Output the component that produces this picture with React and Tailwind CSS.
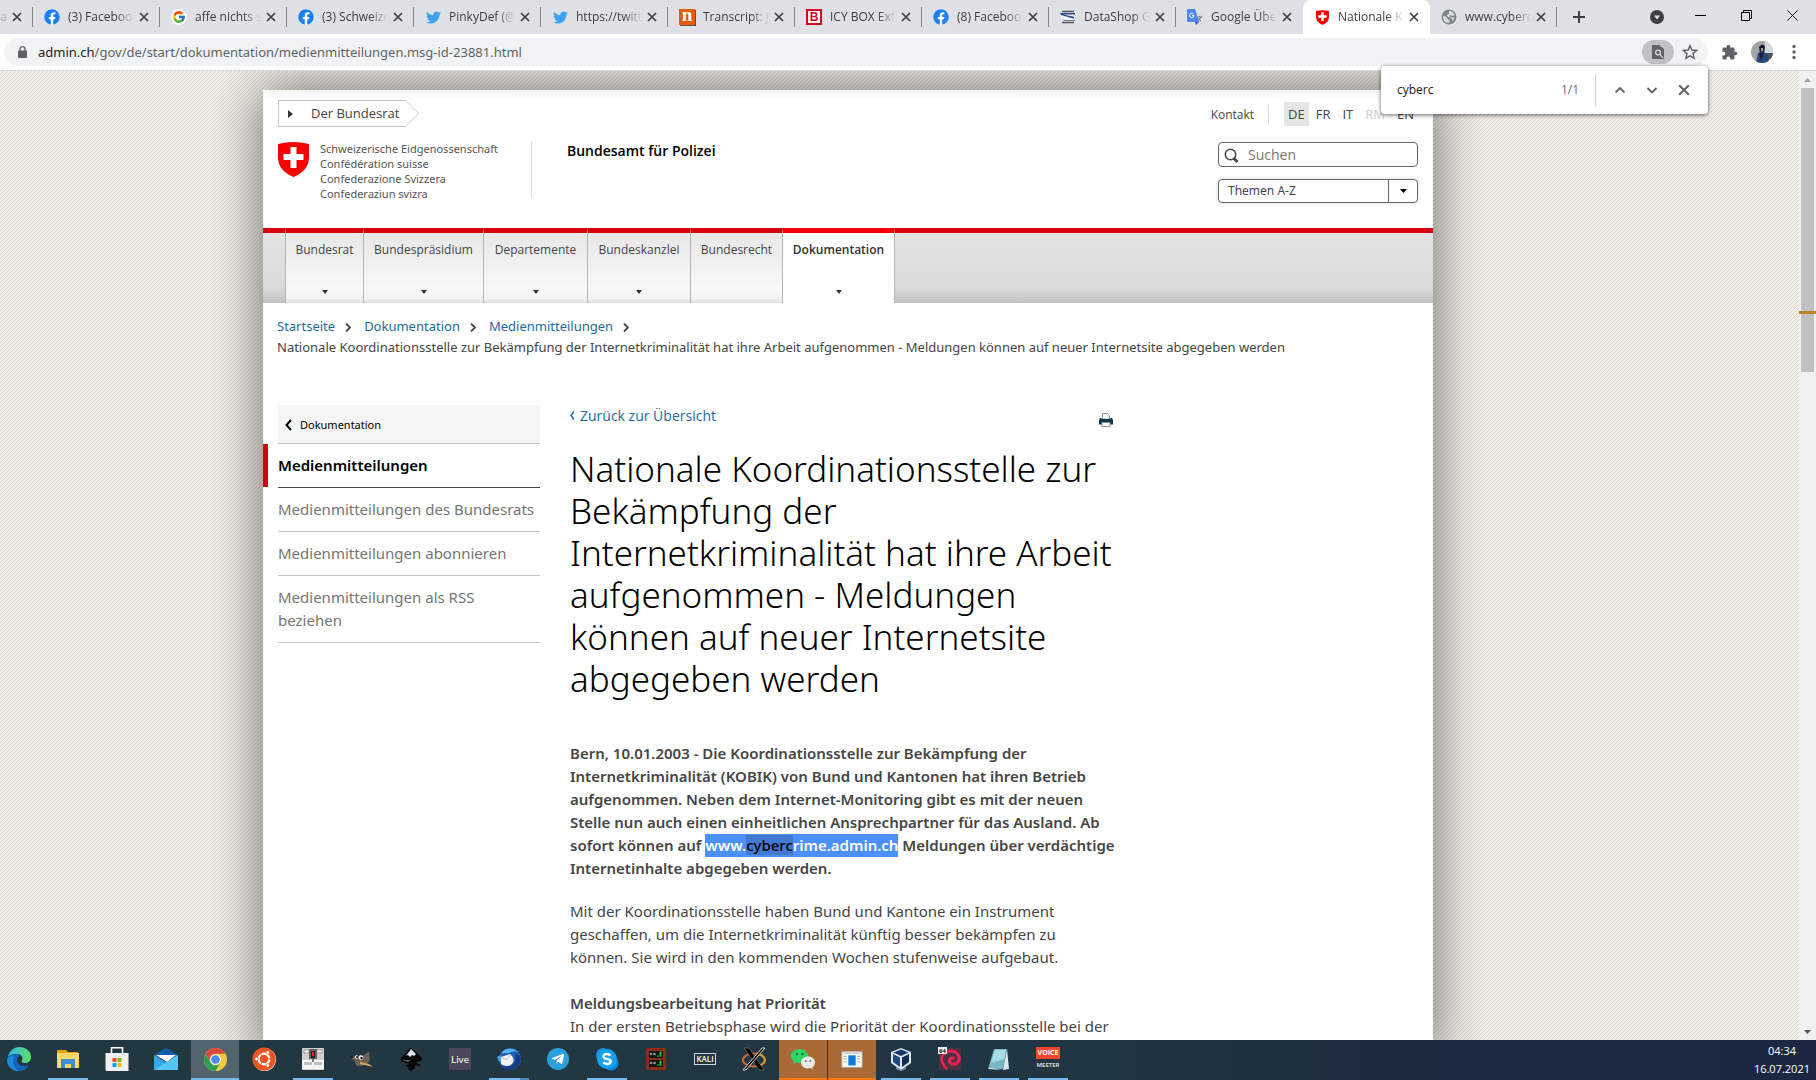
import React from "react";
import { FaFacebook, FaTwitter, FaTelegramPlane, FaUbuntu } from "react-icons/fa";
import { FcGoogle } from "react-icons/fc";

const FADE = "[mask-image:linear-gradient(to_right,#000_calc(100%-18px),transparent)]";

function Shield({ className }) {
  return (
    <svg viewBox="0 0 31 35" className={className} aria-hidden="true">
      <path d="M0 2Q15.500-2 31 2V15C31 25 25 31 15.500 35 6 31 0 25 0 15Z" fill="#f70000" />
      <path d="M12.500 5h6v7h7v6h-7v8h-6v-8h-7v-6h7z" fill="#fff" />
    </svg>
  );
}

function FacebookIcon() {
  return (
    <span className="flex size-4 items-center justify-center rounded-full bg-white">
      <FaFacebook className="size-4 text-[#1c80f2]" />
    </span>
  );
}

function GoogleIcon() {
  return (
    <span className="flex size-4 items-center justify-center rounded-full bg-white">
      <FcGoogle className="size-[14px]" />
    </span>
  );
}

function TwitterIcon() {
  return <FaTwitter className="size-[15px] text-[#3ea2f2]" />;
}

function LetterIcon() {
  return (
    <span className="flex size-4 items-center justify-center overflow-hidden bg-[#ea5a04] pb-[5px] font-['Liberation_Serif',serif] text-[19px] leading-[12px] font-bold text-white shadow-[1px_1px_0_#555]">
      n
    </span>
  );
}

function BoxIcon() {
  return (
    <span className="flex size-4 items-center justify-center border-2 border-[#d7061b] bg-white font-['Liberation_Sans',sans-serif] text-[12px] leading-[12px] font-bold text-[#d7061b]">
      B
    </span>
  );
}

function DataShopIcon() {
  return (
    <svg viewBox="0 0 16 16" className="size-4" aria-hidden="true">
      <path d="M2 2.500h12M2 13.500h12" stroke="#555" strokeWidth="1.500" />
      <path d="M1 4h14v7H5L1 9z" fill="#eef0f6" />
      <path d="M0 4h15v1.500H3l11 2.300v2L1 6z" fill="#2f4a8f" />
      <path d="M4 11h11v1H3z" fill="#7683a8" />
    </svg>
  );
}

function TranslateIcon() {
  return (
    <svg viewBox="0 0 16 16" className="size-4" aria-hidden="true">
      <path d="M6 4h9a1 1 0 011 1v10a1 1 0 01-1 1H9z" fill="#dcdcdc" />
      <path d="M1 0h7l4 13H1a1 1 0 01-1-1V1a1 1 0 011-1z" fill="#5186ec" />
      <path d="M8 13h4l-3 3z" fill="#3457b2" />
      <path d="M6.500 5A2.200 2.200 0 107 6.700H5" stroke="#fff" fill="none" />
      <path d="M10 8h5M12.500 7v1M14 8q-1 3-4 4M11 9q1 2 3 3" stroke="#607988" fill="none" />
    </svg>
  );
}

function GlobeIcon() {
  return (
    <svg viewBox="0 0 16 16" className="size-4" aria-hidden="true">
      <circle cx="8" cy="8" r="7.500" fill="#80868b" />
      <path d="M2 7q3 0 4 2t2 2 0 3Q2 14 2 7zM8 2q4 0 5.500 4l-2 1-2-1-1 1 2 1.500h3L12 12q-2-4-4-4T6 6l2-1z" fill="#dee1e6" />
    </svg>
  );
}

function ShieldIcon() {
  return <Shield className="h-[15px] w-[13px]" />;
}

const tabs = [
  { title: "(3) Facebook", Icon: FacebookIcon },
  { title: "affe nichts se", Icon: GoogleIcon },
  { title: "(3) Schweizer", Icon: FacebookIcon },
  { title: "PinkyDef (@P", Icon: TwitterIcon },
  { title: "https://twitte", Icon: TwitterIcon },
  { title: "Transcript: Ja", Icon: LetterIcon },
  { title: "ICY BOX Exte", Icon: BoxIcon },
  { title: "(8) Facebook", Icon: FacebookIcon },
  { title: "DataShop Ge", Icon: DataShopIcon },
  { title: "Google Übers", Icon: TranslateIcon },
  { title: "Nationale Ko", Icon: ShieldIcon, active: true },
  { title: "www.cybercr", Icon: GlobeIcon },
];

function Cross({ className }) {
  return (
    <svg viewBox="0 0 10 10" className={className} aria-hidden="true">
      <path d="M1 1l8 8M9 1l-8 8" stroke="currentColor" strokeWidth="1.700" />
    </svg>
  );
}

function Tab({ title, Icon, active }) {
  const shape = active ? "rounded-t-lg bg-white" : "";
  const edge = active || title === "Google Übers" ? "border-transparent" : "border-[#85888c]";
  return (
    <div className={"flex h-[34px] w-[127px] shrink-0 items-center " + shape}>
      <span className="ml-[11px] flex w-4 shrink-0 justify-center">
        <Icon />
      </span>
      <span className={"ml-2 w-[66px] overflow-hidden text-[12px] whitespace-nowrap text-[#3c4043] " + FADE}>{title}</span>
      <button aria-label={"Tab schliessen: " + title} className="ml-[2px] flex size-4 items-center justify-center text-[#3c4043]">
        <Cross className="size-[10px]" />
      </button>
      <span className={"ml-auto h-5 border-r " + edge} />
    </div>
  );
}

function TabStrip() {
  return (
    <div className="flex h-[34px] items-center bg-[#dee1e6]">
      <div className="flex w-[33px] shrink-0 items-center">
        <span className="w-[7px] text-[12px] text-[#b5b8bc]">a</span>
        <button aria-label="Tab schliessen" className="ml-[2px] flex size-4 items-center justify-center text-[#3c4043]">
          <Cross className="size-[10px]" />
        </button>
        <span className="ml-auto h-5 border-r border-[#85888c]" />
      </div>
      {tabs.map((t, i) => (
        <Tab key={i} {...t} />
      ))}
      <button aria-label="Neuer Tab" className="ml-[15px] text-[#3c4043]">
        <svg viewBox="0 0 14 14" className="size-[14px]"><path d="M7 1v12M1 7h12" stroke="currentColor" strokeWidth="2" /></svg>
      </button>
      <div className="ml-auto flex items-center pr-[18px]">
        <button aria-label="Tabs durchsuchen" className="mr-[31px]">
          <svg viewBox="0 0 14 14" className="size-[14px]"><circle cx="7" cy="7" r="7" fill="#3c4043" /><path d="M4 5.500h6L7 9.500z" fill="#dee1e6" /></svg>
        </button>
        <button aria-label="Minimieren" className="mr-[35px]">
          <svg viewBox="0 0 11 11" className="size-[11px]"><path d="M0 3.500h11" stroke="#000" /></svg>
        </button>
        <button aria-label="Wiederherstellen" className="mr-[35px] mb-1">
          <svg viewBox="0 0 11 11" className="size-[11px]"><path d="M.5 2.500h8v8h-8zM2.500 2.500v-2h8v8h-2" stroke="#000" fill="none" /></svg>
        </button>
        <button aria-label="Schliessen" className="mb-1">
          <svg viewBox="0 0 11 11" className="size-[11px]"><path d="M.5.5l10 10M10.500.5l-10 10" stroke="#000" /></svg>
        </button>
      </div>
    </div>
  );
}

function Toolbar() {
  return (
    <div className="flex h-[37px] items-center border-b border-[#d5d7da] bg-white pl-1">
      <div className="flex h-7 flex-1 items-center rounded-full bg-[#f1f3f4] pl-[14px]">
        <svg viewBox="0 0 9 12" className="h-3 w-[9px]" aria-hidden="true">
          <path d="M2 5V3.200a2.500 2.500 0 015 0V5" stroke="#5f6368" strokeWidth="1.300" fill="none" />
          <rect y="4.500" width="9" height="7.500" rx="1" fill="#5f6368" />
        </svg>
        <span className="ml-[11px] pt-[2px] font-['Noto_Sans',sans-serif] text-[13px] text-[#5f6368]">
          <span className="text-[#202124]">admin.ch</span>/gov/de/start/dokumentation/medienmitteilungen.msg-id-23881.html
        </span>
        <button aria-label="Auf Seite suchen" className="ml-auto flex h-6 w-8 items-center justify-center rounded-full bg-[#bfc1c4]">
          <svg viewBox="0 0 12 14" className="h-[14px] w-3"><path d="M1 0h6l5 4v9a1 1 0 01-1 1H1a1 1 0 01-1-1V1a1 1 0 011-1z" fill="#5f6368" /><circle cx="6" cy="7.500" r="2.400" fill="none" stroke="#dcdddf" strokeWidth="1.200" /><path d="M7.500 9.200l3.500 3.600" stroke="#dcdddf" strokeWidth="1.200" /></svg>
        </button>
        <button aria-label="Lesezeichen" className="mr-[10px] ml-2">
          <svg viewBox="0 0 24 24" className="size-4"><path d="M12 2.500l2.800 6.600 7.200.6-5.500 4.700 1.700 7-6.200-3.700-6.200 3.700 1.700-7L2 9.700l7.200-.6z" fill="none" stroke="#5f6368" strokeWidth="2.200" /></svg>
        </button>
      </div>
      <button aria-label="Erweiterungen" className="ml-[13px]">
        <svg viewBox="0 0 24 24" className="size-[17px]"><path d="M20.500 11H19V7a2 2 0 00-2-2h-4V3.500a2.500 2.500 0 00-5 0V5H4a2 2 0 00-2 2v3.800h1.500a2.700 2.700 0 010 5.400H2V20a2 2 0 002 2h3.800v-1.500a2.700 2.700 0 015.400 0V22H17a2 2 0 002-2v-4h1.500a2.500 2.500 0 000-5z" fill="#5f6368" /></svg>
      </button>
      <button aria-label="Profil" className="ml-[13px]">
        <svg viewBox="0 0 22 22" className="size-[22px]">
          <clipPath id="profile"><circle cx="11" cy="11" r="11" /></clipPath>
          <g clipPath="url(#profile)">
            <path d="M0 0h22v22H0z" fill="#a3a5a6" />
            <path d="M14 0h8v12h-8z" fill="#d6d9db" />
            <path d="M15 12h7v6h-7z" fill="#4d5256" />
            <path d="M8 6q4-5 6 0l-1 5-4 1z" fill="#161a30" />
            <path d="M10 7h2v3h-2z" fill="#bb9b8b" />
            <path d="M5 22l2-10 4-2 5 3 3 9z" fill="#244a80" />
            <path d="M8 12l2 8 3-8z" fill="#15213c" />
          </g>
        </svg>
      </button>
      <button aria-label="Menü" className="mr-5 ml-[19px]">
        <svg viewBox="0 0 4 16" className="h-4 w-1"><g fill="#5f6368"><circle cx="2" cy="2.500" r="1.700" /><circle cx="2" cy="8" r="1.700" /><circle cx="2" cy="13.500" r="1.700" /></g></svg>
      </button>
    </div>
  );
}

function FindBar() {
  return (
    <div className="absolute top-[66px] right-[108px] z-20 flex h-12 w-[327px] items-center rounded-[4px] bg-white pl-4 shadow-[0_1px_4px_rgba(0,0,0,0.6)]">
      <input aria-label="Suchen auf Seite" defaultValue="cyberc" className="w-[100px] text-[12px] text-[#202124] outline-none" />
      <span className="ml-auto text-[12px] text-[#6b6f73]">1/1</span>
      <span className="ml-4 h-8 border-r border-[#d0d2d5]" />
      <div className="ml-[18px] flex gap-[20px] pr-[18px] text-[#5f6368]">
        <button aria-label="Vorheriges"><svg viewBox="0 0 12 12" className="size-3"><path d="M1.500 8.500L6 4l4.500 4.500" stroke="currentColor" strokeWidth="1.800" fill="none" /></svg></button>
        <button aria-label="Nächstes"><svg viewBox="0 0 12 12" className="size-3"><path d="M1.500 4L6 8.500 10.500 4" stroke="currentColor" strokeWidth="1.800" fill="none" /></svg></button>
        <button aria-label="Suche schliessen"><Cross className="size-3" /></button>
      </div>
    </div>
  );
}

function SiteHeader() {
  return (
    <header className="flex justify-between bg-[linear-gradient(#f4f4f4,#fff_10px)] pt-[10px] pr-[15px] pb-[25px] pl-[15px]">
      <div className="flex">
        <div className="w-[254px]">
          <a href="#bundesrat" className="flex w-fit items-center">
            <span className="flex h-[27px] w-[128px] items-center border border-r-0 border-[#c4c4c4] pl-[9px] text-[13px] text-[#454545]">
              <svg viewBox="0 0 5 8" className="h-2 w-[5px]" aria-hidden="true"><path d="M0 0l5 4-5 4z" fill="#333" /></svg>
              <span className="ml-[18px]">Der Bundesrat</span>
            </span>
            <svg viewBox="0 0 13 27" className="h-[27px] w-[13px]" aria-hidden="true"><path d="M0 .5L12.500 13.500 0 26.500" fill="none" stroke="#cfcfcf" /></svg>
          </a>
          <div className="mt-[15px] flex h-14 items-start border-r border-[#dcdcdc]">
            <Shield className="h-[35px] w-[31px]" />
            <p className="-mt-px ml-[11px] font-['Noto_Sans',sans-serif] text-[11px] leading-[15px] whitespace-nowrap text-[#555]">
              Schweizerische Eidgenossenschaft<br />Confédération suisse<br />Confederazione Svizzera<br />Confederaziun svizra
            </p>
          </div>
        </div>
        <p className="mt-[41px] ml-[35px] text-[14px] leading-5 font-semibold text-black">Bundesamt für Polizei</p>
      </div>
      <div className="mt-[2px] flex flex-col items-end">
        <div className="-mr-px flex items-center text-[13px] text-[#454545]">
          <a href="#kontakt" className="pt-px text-[12px]">Kontakt</a>
          <span className="mr-[15px] ml-[14px] h-[19px] border-r border-[#dcdcdc]" />
          <nav aria-label="Sprache" className="flex gap-[2px] leading-6">
            <a href="#de" className="bg-[#e5e5e5] px-1">DE</a>
            <a href="#fr" className="px-[5px]">FR</a>
            <a href="#it" className="px-[5px]">IT</a>
            <span className="px-[5px] text-[#ccc]">RM</span>
            <a href="#en" className="px-[5px]">EN</a>
          </nav>
        </div>
        <label className="mt-4 flex h-[25px] w-[200px] items-center rounded-[4px] border border-[#666] bg-white pl-[5px]">
          <svg viewBox="0 0 15 15" className="mt-px size-[15px]" aria-hidden="true"><circle cx="6.500" cy="6.500" r="5.200" fill="none" stroke="#454545" strokeWidth="1.500" /><path d="M9.500 10l4 4" stroke="#454545" strokeWidth="2.600" /></svg>
          <input aria-label="Suchen" placeholder="Suchen" className="ml-[9px] w-[160px] text-[14px] leading-5 outline-none placeholder:text-[#757575]" />
        </label>
        <div className="relative mt-3 flex h-6 w-[200px] rounded-[4px] border border-[#666] bg-white shadow-[0_0_4px_rgba(0,0,0,0.15)]">
          <select aria-label="Themen A-Z" className="w-full appearance-none pl-[9px] font-['Noto_Sans',sans-serif] text-[12px] leading-[20px] text-[#454545] outline-none">
            <option>Themen A-Z</option>
          </select>
          <span className="pointer-events-none absolute top-0 right-0 flex h-full w-[29px] items-center justify-center border-l border-[#666]">
            <svg viewBox="0 0 7 4" className="h-1 w-[7px]"><path d="M0 0h7L3.500 4z" /></svg>
          </span>
        </div>
      </div>
    </header>
  );
}

function Caret() {
  return (
    <svg viewBox="0 0 6 4" className="h-1 w-[6px]" aria-hidden="true"><path d="M0 0h6L3 4z" fill="#333" /></svg>
  );
}

const navItems = [
  { label: "Bundesrat", size: "w-[78px]", menu: true },
  { label: "Bundespräsidium", size: "w-[120px]", menu: true },
  { label: "Departemente", size: "w-[104px]", menu: true },
  { label: "Bundeskanzlei", size: "w-[103px]", menu: true },
  { label: "Bundesrecht", size: "w-[92px]" },
];

function MainNav() {
  return (
    <nav aria-label="Hauptnavigation" className="flex h-[75px] bg-[linear-gradient(#e4e4e4,#dadada_80%,#c3c3c3)]">
      <div className="w-[23px] border-t-5 border-r border-t-[#d8000f] border-r-[#b4b4b4]" />
      {navItems.map((n) => (
        <a key={n.label} href={"#" + n.label} className={"flex flex-col items-center justify-between border-t-5 border-r border-t-[#d8000f] border-r-[#b4b4b4] bg-[linear-gradient(#e8e8e8,#f8f8f8_80%,#f4f4f4_93%,#ddd)] pt-2 pb-[9px] text-[12px] leading-[18px] text-[#454545] " + n.size}>
          <span>{n.label}</span>
          {n.menu && <Caret />}
        </a>
      ))}
      <a href="#dokumentation" aria-current="page" className="flex w-[112px] flex-col items-center justify-between border-t-5 border-r border-t-[#f5000f] border-r-[#b4b4b4] bg-white pt-2 pb-[9px] text-[12px] leading-[18px] font-semibold text-[#333]">
        <span>Dokumentation</span>
        <Caret />
      </a>
      <div className="flex-1 border-t-5 border-[#d8000f]" />
    </nav>
  );
}

function CrumbArrow() {
  return (
    <svg viewBox="0 0 6 9" className="mr-[13px] ml-[10px] inline-block h-[9px] w-[6px]" aria-hidden="true"><path d="M1 .5l4 4-4 4" fill="none" stroke="#454545" strokeWidth="1.800" /></svg>
  );
}

function Breadcrumb() {
  return (
    <nav aria-label="Pfad" className="pt-[13px] pl-[14px] text-[13px] leading-[21px] text-[#454545]">
      <div>
        <a href="#start" className="text-[#236a9f]">Startseite</a><CrumbArrow />
        <a href="#dok" className="text-[#236a9f]">Dokumentation</a><CrumbArrow />
        <a href="#mm" className="text-[#236a9f]">Medienmitteilungen</a><CrumbArrow />
      </div>
      <p>Nationale Koordinationsstelle zur Bekämpfung der Internetkriminalität hat ihre Arbeit aufgenommen - Meldungen können auf neuer Internetsite abgegeben werden</p>
    </nav>
  );
}

function Sidebar() {
  return (
    <aside className="w-[277px] shrink-0 text-[15px] leading-[23px] text-[#757575]">
      <a href="#dokumentation" className="ml-[15px] flex items-center border-b border-[#c6c6c6] bg-[#f5f5f5] pt-[11px] pb-[9px] pl-[7px] text-[11px] leading-[18px] text-black">
        <svg viewBox="0 0 7 12" className="mr-2 h-3 w-[7px]" aria-hidden="true"><path d="M6 1L1.500 6 6 11" fill="none" stroke="#000" strokeWidth="2" /></svg>
        Dokumentation
      </a>
      <div className="border-l-5 border-[#d8000f] pl-[10px]">
        <a href="#medienmitteilungen" aria-current="page" className="block pt-[10px] pb-[10px] font-semibold text-black">Medienmitteilungen</a>
      </div>
      <div className="ml-[15px] border-t border-[#454545]">
        <a href="#bundesrats" className="block border-b border-[#c6c6c6] py-[10px] whitespace-nowrap">Medienmitteilungen des Bundesrats</a>
        <a href="#abonnieren" className="block border-b border-[#c6c6c6] py-[10px]">Medienmitteilungen abonnieren</a>
        <a href="#rss" className="block border-b border-[#c6c6c6] py-[10px]">Medienmitteilungen als RSS<br />beziehen</a>
      </div>
    </aside>
  );
}

function Article() {
  return (
    <article className="ml-[30px] w-[556px] text-[15px] leading-[23px] whitespace-nowrap text-[#454545]">
      <div className="flex items-center justify-between pr-[13px]">
        <a href="#zurueck" className="flex items-center font-['Open_Sans',sans-serif] text-[14px] text-[#236a9f]">
          <svg viewBox="0 0 5 9" className="mr-[5px] h-[9px] w-[5px]" aria-hidden="true"><path d="M4 .5L1 4.500l3 4" fill="none" stroke="currentColor" strokeWidth="1.500" /></svg>
          Zurück zur Übersicht
        </a>
        <button aria-label="Drucken" className="mt-2">
          <svg viewBox="0 0 14 14" className="size-[14px]"><path d="M3.500.5h5l2 2V6h-7z" fill="#fff" stroke="#8a949c" /><path d="M1 5h1.500v1h9V5H13l1 2v4.500H0V7z" fill="#12344d" /><path d="M3 9.500h8v4H3z" fill="#fff" stroke="#8a949c" /></svg>
        </button>
      </div>
      <h1 className="mt-[21px] text-[35px] leading-[42px] font-light text-black">
        Nationale Koordinationsstelle zur<br />Bekämpfung der<br />Internetkriminalität hat ihre Arbeit<br />aufgenommen - Meldungen<br />können auf neuer Internetsite<br />abgegeben werden
      </h1>
      <p className="mt-[42px] font-semibold">
        Bern, 10.01.2003 - Die Koordinationsstelle zur Bekämpfung der<br />
        Internetkriminalität (KOBIK) von Bund und Kantonen hat ihren Betrieb<br />
        aufgenommen. Neben dem Internet-Monitoring gibt es mit der neuen<br />
        Stelle nun auch einen einheitlichen Ansprechpartner für das Ausland. Ab<br />
        sofort können auf <span className="inline-block bg-[#4a90ff] text-white">www.<mark className="bg-[#427ad2] font-medium text-black">cyberc</mark>rime.admin.ch</span> Meldungen über verdächtige<br />
        Internetinhalte abgegeben werden.
      </p>
      <p className="mt-5">
        Mit der Koordinationsstelle haben Bund und Kantone ein Instrument<br />
        geschaffen, um die Internetkriminalität künftig besser bekämpfen zu<br />
        können. Sie wird in den kommenden Wochen stufenweise aufgebaut.
      </p>
      <h2 className="mt-[23px] font-semibold">Meldungsbearbeitung hat Priorität</h2>
      <p>In der ersten Betriebsphase wird die Priorität der Koordinationsstelle bei der</p>
    </article>
  );
}

function Scrollbar() {
  return (
    <div className="flex w-[17px] shrink-0 flex-col items-center bg-[#f1f1f1]">
      <svg viewBox="0 0 17 17" className="size-[17px] shrink-0" aria-hidden="true"><path d="M5 11h7L8.500 7z" fill="#a3a3a3" /></svg>
      <div className="flex h-[284px] w-[13px] shrink-0 flex-col justify-end bg-[#c1c1c1] pb-[58px]">
        <div className="-mx-[2px] h-[3px] bg-[#b8842e]" />
      </div>
      <svg viewBox="0 0 17 17" className="mt-auto size-[17px]" aria-hidden="true"><path d="M5 7h7l-3.500 4z" fill="#505050" /></svg>
    </div>
  );
}

const EdgeApp = () => (
  <svg viewBox="0 0 24 24" className="size-6">
    <defs>
      <linearGradient id="edgeA" x1="0" y1="0" x2="1" y2="0"><stop offset="0" stopColor="#2fb4e8" /><stop offset="1" stopColor="#5fe06a" /></linearGradient>
    </defs>
    <path d="M1 10C2 4 7 0 12.500 0 19 0 24 4.500 24 10c0 4-3 6-6 6-3 0-4-1-3-3 1.500-3-1-6-5-6-4.500 0-8 2-9 3z" fill="url(#edgeA)" />
    <path d="M10 7c-5 0-9.500 2-10 6 0 7 6 11 12 11 5 0 9-3 10-6-4 2-12 1-12-5 0-3 1.500-4 3-4-1-1.300-2-2-3-2z" fill="#1263b5" />
    <path d="M8 10c-4 4-1 13 5 14-6 1-13-4-13-11 .5-3 4-5 8-3z" fill="#1b8ad8" />
  </svg>
);
const FolderApp = () => (
  <svg viewBox="0 0 24 24" className="size-6"><path d="M1 3h9l2 2h10v16H1z" fill="#e5a50a" /><path d="M1 6h22v15H1z" fill="#ffd768" /><path d="M5 12h14v9h-4v-4H9v4H5z" fill="#3d8fd1" /></svg>
);
const StoreApp = () => (
  <svg viewBox="0 0 24 24" className="size-6"><path d="M6.500 7V.8h11V7" fill="none" stroke="#fff" strokeWidth="1.600" /><path d="M.5 6h23v18h-22l-1-1z" fill="#f0f0f0" /><path d="M7.500 11h4v4h-4z" fill="#f25022" /><path d="M12.500 11h4v4h-4z" fill="#7fba00" /><path d="M7.500 16h4v4h-4z" fill="#00a4ef" /><path d="M12.500 16h4v4h-4z" fill="#ffb900" /></svg>
);
const MailApp = () => (
  <svg viewBox="0 0 24 24" className="size-6"><path d="M0 8l12-7 12 7v3H0z" fill="#0f5fa8" /><path d="M2 8h20l-9 7z" fill="#fff" /><path d="M0 8l13 8 11-8v15H0z" fill="#33a8ea" /><path d="M0 23L24 8v15z" fill="#53c6f6" /></svg>
);
const ChromeApp = () => (
  <svg viewBox="0 0 24 24" className="size-[23px]"><circle cx="12" cy="12" r="12" fill="#f6c944" /><path d="M1.600 6A12 12 0 0122.400 6H12a6 6 0 00-5.200 9z" fill="#d94b3f" /><path d="M1.600 6A12 12 0 0012 24l5.200-9a6 6 0 01-10.400 0z" fill="#2f9e58" /><circle cx="12" cy="12" r="5.600" fill="#fff" /><circle cx="12" cy="12" r="4.500" fill="#4a87ee" /></svg>
);
const UbuntuApp = () => (
  <span className="flex size-[23px] items-center justify-center rounded-full bg-white"><FaUbuntu className="size-6 shrink-0 text-[#e95420]" /></span>
);
const PressApp = () => (
  <svg viewBox="0 0 24 24" className="size-6"><rect x="1" y="1" width="22" height="22" rx="1" fill="#d0d0d0" /><path d="M1 13h22v9H1z" fill="#f5f5f5" /><path d="M3 3h18v3H3z" fill="#eee" stroke="#888" strokeWidth=".7" /><path d="M8 2h8v10H8z" fill="#626262" /><path d="M10 4h4v7h-4z" fill="#222" /><path d="M11 5h2v4h-2z" fill="#e02626" /><path d="M12 12v3" stroke="#555" strokeWidth="1.500" /><path d="M4 15v3M6 15v3M8 15v3M10 15v3M14 15v3M16 15v3M18 15v3M20 15v3" stroke="#888" /></svg>
);
const GimpApp = () => (
  <svg viewBox="0 0 24 24" className="size-6"><path d="M0 9q5 1 9 0 5 1 10-5l1 9q-3 6-10 6-6 0-5-5-4-1-5-5z" fill="#6b6154" /><circle cx="6.500" cy="10" r="1.700" fill="#fff" /><circle cx="11" cy="10.500" r="2.300" fill="#fff" /><circle cx="7" cy="10" r="1" /><circle cx="11.500" cy="11" r="1.200" /><path d="M10 15l9 2 4 3-4-1-9-2z" fill="#d8a060" /><circle cx="1.500" cy="10" r="1.500" fill="#222" /></svg>
);
const InkscapeApp = () => (
  <svg viewBox="0 0 24 24" className="size-6"><path d="M12 1q1 0 3 2l8 8q1 2-2 3l-4 1 2 2-3 2-1 3-3 2-3-2 1-2-4-1 4-2-6-2q-4-1-2-4l7-8q2-2 3-2z" fill="#050505" /><path d="M12 2l5 5-2 2-2-1-2 2-2-2-2 1z" fill="#dfe6ee" /><path d="M3 12q5 2 9 1l-3 2q-4-1-6-3z" fill="#5c6e82" /><path d="M18 18h3" stroke="#050505" strokeWidth="2" /></svg>
);
const LiveApp = () => (
  <span className="flex h-[22px] w-[22px] items-center justify-center bg-[#4b4659] font-['Lato',sans-serif] text-[10px] leading-none text-white">Live</span>
);
const BirdApp = () => (
  <svg viewBox="0 0 24 24" className="size-6"><circle cx="13" cy="12" r="11" fill="#2460b8" /><path d="M4 6Q12-2 22 5q-6-2-10 1z" fill="#5ab4f2" /><path d="M24 11q-1 12-12 12-6 0-9-5 8 4 13-1 4-4 2-10 4 0 6 4z" fill="#163c86" /><path d="M4 10l9-3q6 5 2 10-5 4-11 0z" fill="#f3f3f3" /><path d="M4 10q4 3 6 2t3-5" fill="none" stroke="#b9bec6" /><path d="M0 10l4-2v8q-3-2-4-6z" fill="#4ba0e4" /></svg>
);
const TelegramApp = () => (
  <span className="flex size-[22px] items-center justify-center rounded-full bg-[#2ca0dc]"><FaTelegramPlane className="size-[14px] text-white" /></span>
);
const SkypeApp = () => (
  <svg viewBox="0 0 24 24" className="size-6"><circle cx="8" cy="8" r="7" fill="#1b8fe8" /><circle cx="16" cy="16" r="7.500" fill="#0a84dd" /><circle cx="12" cy="12" r="10" fill="#12a2ee" /><path d="M15.500 8.500Q14 7 12 7 8.500 7 8.500 9.400q0 2 3.500 2.600 3.700.6 3.700 2.700Q15.500 17 12 17q-2.300 0-3.800-1.700" fill="none" stroke="#fff" strokeWidth="2.400" /></svg>
);
const RackApp = () => (
  <svg viewBox="0 0 24 24" className="size-6"><rect x="2" y="1" width="20" height="22" rx="2" fill="#8e2c16" /><path d="M5 4h14v7H5zM5 13h14v7H5z" fill="#141414" /><path d="M13 9h5M13 18h5" stroke="#18c33f" strokeWidth="1.200" fill="none" /><path d="M16.500 4.500v4M16.500 13.500v4" stroke="#18c33f" strokeWidth="2" /><circle cx="7" cy="7" r="1.300" fill="#999" /><circle cx="10.500" cy="7" r="1.300" fill="#999" /><circle cx="7" cy="16" r="1.300" fill="#999" /><circle cx="10.500" cy="16" r="1.300" fill="#999" /></svg>
);
const KaliApp = () => (
  <span className="flex h-[12px] w-[22px] items-center justify-center border border-[#cfd4d6] text-[8px] leading-none font-semibold text-white">KALI</span>
);
const XApp = () => (
  <svg viewBox="0 0 24 24" className="size-6"><ellipse cx="12" cy="13" rx="11" ry="6.500" fill="none" stroke="#d9632b" strokeWidth="2" /><path d="M14 19q8-1 9-6-1-4-6-6" fill="none" stroke="#c79a3a" strokeWidth="2" /><path d="M2 1h5l15 22h-5z" fill="#000" stroke="#999" strokeWidth=".5" /><path d="M20 1h3L4 23H1z" fill="#000" stroke="#eee" strokeWidth=".9" /></svg>
);
const WeChatApp = () => (
  <svg viewBox="0 0 24 24" className="size-6"><path d="M8.500 2C4 2 0 5 0 9c0 2.200 1.200 4 3 5.300L2.300 17l3-1.500q1.500.5 3.200.5C13 16 17 13 17 9s-4-7-8.500-7z" fill="#2fd566" /><circle cx="6" cy="7" r="1.200" fill="#187a3a" /><circle cx="11.500" cy="7" r="1.200" fill="#187a3a" /><path d="M17 9.500c-4 0-7 2.600-7 6s3 6 7 6q1.300 0 2.500-.4l2.500 1.400-.6-2.300c1.600-1.100 2.600-2.800 2.600-4.700 0-3.400-3-6-7-6z" fill="#eaeaea" /><circle cx="14.800" cy="14" r="1" fill="#777" /><circle cx="19.300" cy="14" r="1" fill="#777" /></svg>
);
const WindowApp = () => (
  <svg viewBox="0 0 24 24" className="size-[22px]"><path d="M1 4h22v17H1z" fill="#fff" stroke="#b5b5b5" /><path d="M1 4h22v2.500H1z" fill="#d5d5d5" /><path d="M8 8h8v11H8z" fill="#0b7ad8" /><path d="M2.500 9h4M2.500 12h4M2.500 15h4M17.500 9H21M17.500 12H21M17.500 15H21" stroke="#aaa" /></svg>
);
const CubeApp = () => (
  <svg viewBox="0 0 24 24" className="size-6"><path d="M12 1l10 4v11l-10 7L2 16V5z" fill="#dfe6f0" /><path d="M12 2.500l7.500 3L12 9 4.500 5.500z" fill="#17356e" /><path d="M4 7l7 3.500V20l-7-5z" fill="#1f4788" /><path d="M20 7l-7 3.500V20l7-5z" fill="#122a58" /><path d="M7 20l5 3 5-3v2l-5 2-5-2z" fill="#8294b5" /></svg>
);
const SpiralApp = () => (
  <svg viewBox="0 0 24 24" className="size-6"><path d="M1 1h22v22H1z" fill="#4a3240" /><path d="M4 8Q10 2 17 5q5 3 4 8-2 5-7 4-4-2-2-5 2-2 4 0" fill="none" stroke="#ea1f52" strokeWidth="3.200" /><path d="M4 8q-2 8 5 14" fill="none" stroke="#ea1f52" strokeWidth="2.500" /><path d="M0 0h9v7H0z" fill="#f4f4f4" /><text x="1" y="6" fontSize="6" fontWeight="bold" fill="#111">64</text></svg>
);
const NotepadApp = () => (
  <svg viewBox="0 0 24 24" className="size-6"><path d="M7 2h13l-4 20H1z" fill="#78b6c4" /><path d="M8 3h11l-2 9L4 16z" fill="#a9dbe3" /><path d="M20 2l2 20-6 1z" fill="#dfe9ea" /><path d="M1 22l15 1-13-2z" fill="#eee" /></svg>
);
const VoiceApp = () => (
  <span className="flex w-6 flex-col text-center text-[7px] leading-[12px] font-bold text-white">
    <span className="bg-[#f4452f]">VOICE</span>
    <span className="bg-[#263444] text-[6px] text-[#d0d4d8]">MEETER</span>
  </span>
);

const apps = [
  { name: "Edge", Icon: EdgeApp, bar: "bg-transparent" },
  { name: "Explorer", Icon: FolderApp, bar: "bg-[#76b9ed]" },
  { name: "Store", Icon: StoreApp, bar: "bg-transparent" },
  { name: "Mail", Icon: MailApp, bar: "bg-transparent" },
  { name: "Chrome", Icon: ChromeApp, bar: "bg-[#76b9ed] w-full", tile: "bg-[#52656c]" },
  { name: "Ubuntu", Icon: UbuntuApp, bar: "bg-transparent" },
  { name: "Press", Icon: PressApp, bar: "bg-[#76b9ed]" },
  { name: "GIMP", Icon: GimpApp, bar: "bg-transparent" },
  { name: "Inkscape", Icon: InkscapeApp, bar: "bg-transparent" },
  { name: "Ableton Live", Icon: LiveApp, bar: "bg-transparent" },
  { name: "Thunderbird", Icon: BirdApp, bar: "bg-[linear-gradient(to_right,#76b9ed_31px,#5388b4_31px)]" },
  { name: "Telegram", Icon: TelegramApp, bar: "bg-transparent" },
  { name: "Skype", Icon: SkypeApp, bar: "bg-[#76b9ed]" },
  { name: "Rack", Icon: RackApp, bar: "bg-transparent" },
  { name: "Kali", Icon: KaliApp, bar: "bg-transparent" },
  { name: "X", Icon: XApp, bar: "bg-transparent" },
  { name: "WeChat", Icon: WeChatApp, bar: "bg-[#ff7300] w-full", tile: "bg-[#a96a35]" },
  { name: "Fenster", Icon: WindowApp, bar: "bg-[#ff7300] w-full", tile: "bg-[#a96a35]" },
  { name: "VirtualBox", Icon: CubeApp, bar: "bg-[#76b9ed]" },
  { name: "Debian", Icon: SpiralApp, bar: "bg-[#76b9ed]" },
  { name: "Notepad", Icon: NotepadApp, bar: "bg-[#76b9ed]" },
  { name: "Voicemeeter", Icon: VoiceApp, bar: "bg-[#76b9ed]" },
];

function Taskbar() {
  return (
    <div className="flex h-10 shrink-0 justify-between bg-[linear-gradient(to_right,#223840,#203542_60%,#1d2d3f_75%,#1b2743)]">
      <div className="-ml-[5px] flex gap-px">
        {apps.map(({ name, Icon, bar, tile }) => (
          <button key={name} aria-label={name} className={"flex w-12 flex-col items-center " + (tile || "")}>
            <span className="flex h-[38px] items-center">
              <Icon />
            </span>
            <span className={"h-[2px] " + (bar.includes("w-full") ? bar : "w-10 " + bar)} />
          </button>
        ))}
      </div>
      <div className="flex flex-col items-center justify-center pr-[6px] text-[11px] leading-[18px] text-white">
        <span>04:34</span>
        <span>16.07.2021</span>
      </div>
    </div>
  );
}

export default function App() {
  return (
    <div className="relative flex h-screen flex-col overflow-hidden font-['Open_Sans','Noto_Sans',sans-serif]">
      <TabStrip />
      <Toolbar />
      <FindBar />
      <div className="flex min-h-0 flex-1">
        <main className="min-w-0 flex-1 overflow-hidden bg-[#f2efe9] bg-[linear-gradient(135deg,transparent_44%,#dcd8cf_44%,#dcd8cf_56%,transparent_56%)] bg-size-[4px_4px]">
          <div className="mt-[19px] mr-[366px] ml-[263px] min-h-full bg-white shadow-[0_0_50px_rgba(0,0,0,0.55)]">
            <SiteHeader />
            <MainNav />
            <div className="font-['Noto_Sans',sans-serif]">
              <Breadcrumb />
              <div className="mt-[47px] flex">
                <Sidebar />
                <div className="-mt-px">
                  <Article />
                </div>
              </div>
            </div>
          </div>
        </main>
        <Scrollbar />
      </div>
      <Taskbar />
    </div>
  );
}
